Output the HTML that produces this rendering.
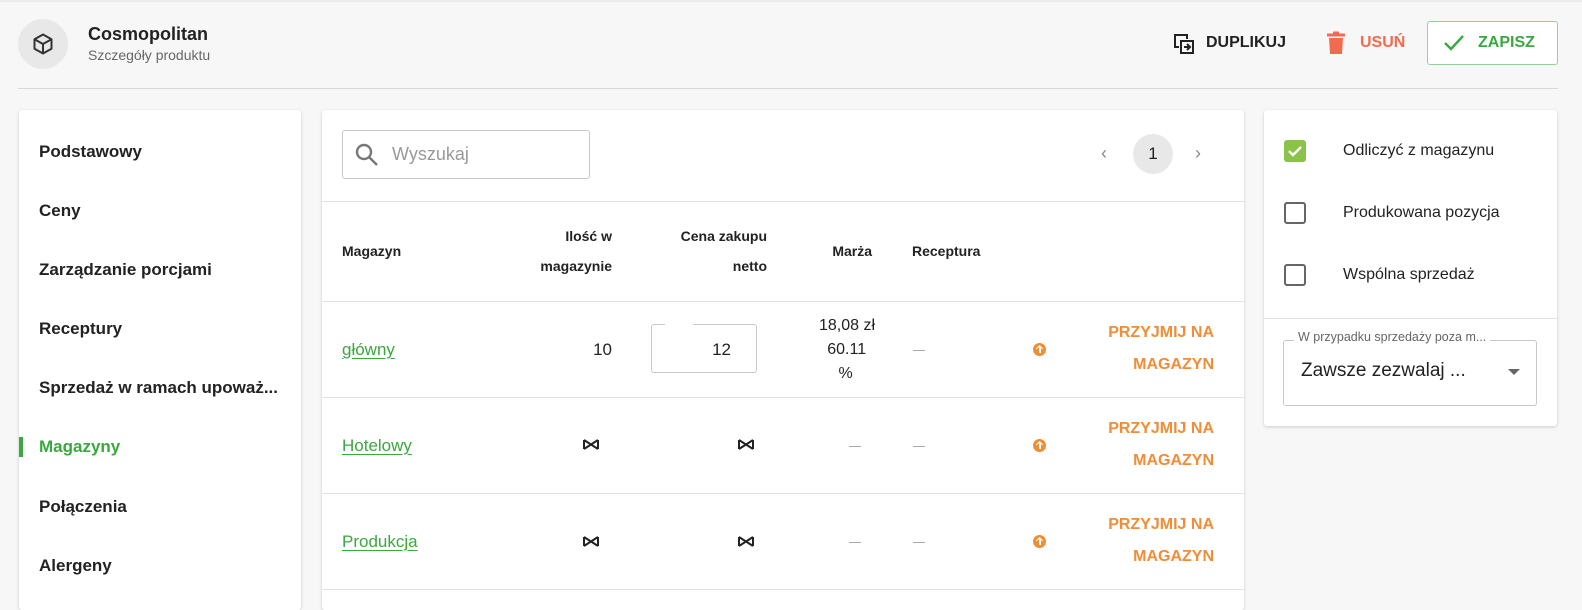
<!DOCTYPE html>
<html><head><meta charset="utf-8"><style>
*{box-sizing:border-box;margin:0;padding:0}
body{width:1582px;height:597px;background:#f7f7f7;font-family:"Liberation Sans",Arial,sans-serif;color:#222;position:relative;overflow:hidden}
.a{position:absolute}
.card{position:absolute;background:#fff;border-radius:3px;box-shadow:0 1px 3px rgba(0,0,0,.18)}
.menu{position:absolute;left:39px;font-size:17px;font-weight:bold;color:#222}
.th{position:absolute;font-size:14px;font-weight:bold;color:#222;line-height:30px}
.r{text-align:right}
.hl{position:absolute;left:322px;width:922px;height:1px;background:#e2e2e2}
.lnk{position:absolute;left:342px;font-size:17px;color:#3aa83f;text-decoration:underline;text-underline-offset:3px}
.orange{position:absolute;right:368px;font-size:16px;font-weight:bold;color:#f28c36;text-align:right;line-height:32px}
.up{position:absolute;left:1033px;width:13px;height:13px;border-radius:50%;background:#f28c36}
.up:after{content:"";position:absolute;left:6px;top:3px;width:1.5px;height:7px;background:#fff}
.up:before{content:"";position:absolute;left:4px;top:3px;width:4px;height:4px;border-left:1.5px solid #fff;border-top:1.5px solid #fff;transform:rotate(45deg);transform-origin:center}
.dash{position:absolute;width:12px;height:1px;background:#aaa}
.cb{position:absolute;left:1284px;width:22px;height:22px;border:2px solid #666;border-radius:3px}
.cbl{position:absolute;left:1343px;font-size:16px;color:#222}
</style></head><body>
<div class="a" style="left:0;top:0;width:1582px;height:2px;background:#ececec"></div>
<div class="a" style="left:18px;top:19px;width:50px;height:50px;border-radius:50%;background:#e8e8e8"></div>
<svg class="a" style="left:31px;top:32px" width="24" height="24" viewBox="0 0 24 24" fill="none" stroke="#333" stroke-width="2" stroke-linejoin="round"><path d="M12 2.5 20.5 7.2v9.6L12 21.5 3.5 16.8V7.2z M3.5 7.2 12 12l8.5-4.8 M12 12v9.5"/></svg>
<div class="a" style="left:88px;top:24px;font-size:18px;font-weight:bold;color:#222">Cosmopolitan</div>
<div class="a" style="left:88px;top:47px;font-size:14px;color:#666">Szczegóły produktu</div>
<div class="a" style="left:18px;top:88px;width:1540px;height:1px;background:#d8d8d8"></div>

<svg class="a" style="left:1173px;top:33px" width="22" height="22" viewBox="0 0 22 22" fill="none" stroke="#222" stroke-width="2"><path d="M6 14H2V2h12v4 M8 8h12v12H8z M11 14h6 M14 11l3 3-3 3"/></svg>
<div class="a" style="left:1206px;top:34px;font-size:16px;font-weight:bold;color:#222">DUPLIKUJ</div>
<svg class="a" style="left:1326px;top:31px" width="20" height="24" viewBox="0 0 20 24" fill="#f26b50"><rect x="1" y="2.5" width="18" height="3" rx="0.5"/><rect x="7" y="0.5" width="6" height="3"/><path d="M3 7h14l-1 16H4z"/></svg>
<div class="a" style="left:1360px;top:34px;font-size:16px;font-weight:bold;color:#f26b50">USUŃ</div>
<div class="a" style="left:1427px;top:21px;width:131px;height:44px;border:1px solid #8fd39a;border-radius:3px;background:#fff"></div>
<svg class="a" style="left:1443px;top:33px" width="22" height="20" viewBox="0 0 22 20" fill="none" stroke="#3aa83f" stroke-width="2.4"><path d="M2 10l6 6L20 3"/></svg>
<div class="a" style="left:1478px;top:34px;font-size:16px;font-weight:bold;color:#3aa83f">ZAPISZ</div>

<div class="card" style="left:19px;top:110px;width:282px;height:500px"></div>
<div class="menu" style="top:142px">Podstawowy</div>
<div class="menu" style="top:201px">Ceny</div>
<div class="menu" style="top:260px">Zarządzanie porcjami</div>
<div class="menu" style="top:319px">Receptury</div>
<div class="menu" style="top:378px">Sprzedaż w ramach upoważ...</div>
<div class="a" style="left:19px;top:437px;width:4px;height:20px;background:#3aa83f"></div>
<div class="menu" style="top:437px;color:#3aa83f">Magazyny</div>
<div class="menu" style="top:497px">Połączenia</div>
<div class="menu" style="top:556px">Alergeny</div>

<div class="card" style="left:322px;top:110px;width:922px;height:500px"></div>
<div class="a" style="left:342px;top:130px;width:248px;height:49px;border:1px solid #c8c8c8;border-radius:3px"></div>
<svg class="a" style="left:354px;top:142px" width="26" height="26" viewBox="0 0 26 26" fill="none" stroke="#777" stroke-width="2.4"><circle cx="10" cy="10" r="7"/><path d="M15 15l8 8"/></svg>
<div class="a" style="left:392px;top:144px;font-size:18px;color:#999">Wyszukaj</div>
<div class="a" style="left:1101px;top:143px;font-size:18px;color:#888">‹</div>
<div class="a" style="left:1133px;top:134px;width:40px;height:40px;border-radius:50%;background:#e8e8e8;text-align:center;line-height:40px;font-size:17px;color:#222">1</div>
<div class="a" style="left:1195px;top:143px;font-size:18px;color:#888">›</div>
<div class="hl" style="top:201px"></div>
<div class="th" style="left:342px;top:236px">Magazyn</div>
<div class="th r" style="left:480px;width:132px;top:221px">Ilość w<br>magazynie</div>
<div class="th r" style="left:640px;width:127px;top:221px">Cena zakupu<br>netto</div>
<div class="th r" style="left:800px;width:72px;top:236px">Marża</div>
<div class="th" style="left:912px;top:236px">Receptura</div>
<div class="hl" style="top:301px"></div>
<div class="lnk" style="top:340px">główny</div>
<div class="a" style="left:580px;top:340px;width:32px;text-align:right;font-size:17px">10</div>
<div class="a" style="left:651px;top:324px;width:106px;height:49px;border:1px solid #c8c8c8;border-radius:3px"></div>
<div class="a" style="left:665px;top:323px;width:28px;height:2px;background:#fff"></div>
<div class="a" style="left:651px;top:340px;width:80px;text-align:right;font-size:17px">12</div>
<div class="a" style="left:800px;top:314px;width:75px;text-align:right;font-size:16px;line-height:24px">18,08 zł<br>60.11&nbsp;&nbsp;<br>%&nbsp;&nbsp;&nbsp;&nbsp;&nbsp;</div>
<div class="dash" style="left:913px;top:350px"></div>
<div class="up" style="top:343px"></div>
<div class="orange" style="top:317px">PRZYJMIJ NA<br>MAGAZYN</div>
<div class="hl" style="top:397px"></div>
<div class="lnk" style="top:436px">Hotelowy</div>
<svg class="a" style="left:583px;top:439px" width="16" height="11" viewBox="0 0 16 11" fill="none" stroke="#222" stroke-width="2"><path d="M1 1v9M15 1v9M1 1l14 9M1 10l14-9"/></svg>
<svg class="a" style="left:738px;top:439px" width="16" height="11" viewBox="0 0 16 11" fill="none" stroke="#222" stroke-width="2"><path d="M1 1v9M15 1v9M1 1l14 9M1 10l14-9"/></svg>
<div class="dash" style="left:849px;top:446px"></div>
<div class="dash" style="left:913px;top:446px"></div>
<div class="up" style="top:439px"></div>
<div class="orange" style="top:413px">PRZYJMIJ NA<br>MAGAZYN</div>
<div class="hl" style="top:493px"></div>
<div class="lnk" style="top:532px">Produkcja</div>
<svg class="a" style="left:583px;top:536px" width="16" height="11" viewBox="0 0 16 11" fill="none" stroke="#222" stroke-width="2"><path d="M1 1v9M15 1v9M1 1l14 9M1 10l14-9"/></svg>
<svg class="a" style="left:738px;top:536px" width="16" height="11" viewBox="0 0 16 11" fill="none" stroke="#222" stroke-width="2"><path d="M1 1v9M15 1v9M1 1l14 9M1 10l14-9"/></svg>
<div class="dash" style="left:849px;top:542px"></div>
<div class="dash" style="left:913px;top:542px"></div>
<div class="up" style="top:535px"></div>
<div class="orange" style="top:509px">PRZYJMIJ NA<br>MAGAZYN</div>
<div class="hl" style="top:589px"></div>

<div class="card" style="left:1264px;top:110px;width:293px;height:316px"></div>
<div class="a" style="left:1284px;top:140px;width:22px;height:22px;border-radius:3px;background:#8bc34a"></div>
<svg class="a" style="left:1286px;top:142px" width="18" height="18" viewBox="0 0 18 18" fill="none" stroke="#fff" stroke-width="2.4"><path d="M3 9l4 4 8-8"/></svg>
<div class="cbl" style="top:142px">Odliczyć z magazynu</div>
<div class="cb" style="top:202px"></div>
<div class="cbl" style="top:204px">Produkowana pozycja</div>
<div class="cb" style="top:264px"></div>
<div class="cbl" style="top:266px">Wspólna sprzedaż</div>
<div class="a" style="left:1264px;top:318px;width:293px;height:1px;background:#e2e2e2"></div>
<div class="a" style="left:1283px;top:340px;width:254px;height:66px;border:1px solid #c8c8c8;border-radius:3px"></div>
<div class="a" style="left:1294px;top:330px;padding:0 4px;background:#fff;font-size:12.5px;color:#666">W przypadku sprzedaży poza m...</div>
<div class="a" style="left:1301px;top:360px;font-size:19px;color:#222">Zawsze zezwalaj ...</div>
<div class="a" style="left:1508px;top:369px;width:0;height:0;border-left:6px solid transparent;border-right:6px solid transparent;border-top:6px solid #666"></div>
</body></html>
